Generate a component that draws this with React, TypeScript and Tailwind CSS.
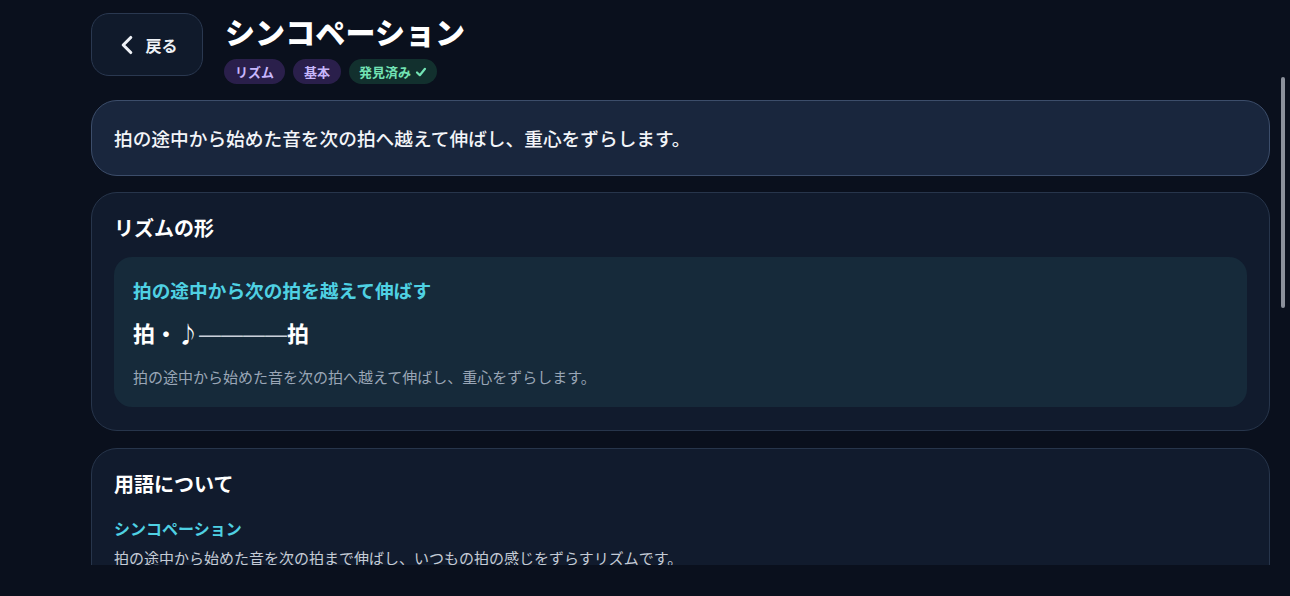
import { ChevronLeft } from 'lucide-react'

const font = { fontFamily: '"Noto Sans CJK JP", "Noto Sans", sans-serif' }

function Tag({ children, tone }: { children: React.ReactNode; tone: 'purple' | 'green' }) {
  return (
    <span
      className={
        tone === 'purple'
          ? 'h-[25px] px-[11px] rounded-full bg-[#2a1f4b] text-[#c7b6fb] text-[13px] font-bold flex items-center'
          : 'h-[25px] px-[10px] rounded-full bg-[#12302e] text-[#72e3b4] text-[13px] font-bold flex items-center gap-[4px]'
      }
    >
      {children}
    </span>
  )
}

export default function App() {
  return (
    <div className="relative h-[596px] w-full overflow-hidden bg-[#0a101d] text-[#f3f5f9]" style={font}>
      <div className="h-[565px] overflow-hidden pl-[91px] pr-[20px] pt-[13px]">
        {/* Header */}
        <div className="flex items-start gap-[22px]">
          <button className="w-[112px] h-[63px] rounded-[18px] border border-[#2a3850] bg-[#101a2b] flex items-center justify-center gap-[3px] text-[16px] font-bold text-[#eef1f6]">
            <ChevronLeft className="w-[30px] h-[30px] -ml-[4px]" strokeWidth={2.5} />
            <span>戻る</span>
          </button>
          <div className="flex flex-col">
            <h1 className="text-[30px] leading-[36px] font-black tracking-[0.1px] text-white">シンコペーション</h1>
            <div className="flex gap-[8px] mt-[10px] -ml-[1px]">
              <Tag tone="purple">リズム</Tag>
              <Tag tone="purple">基本</Tag>
              <Tag tone="green">
                発見済み
                <svg viewBox="0 0 12 12" className="w-[12px] h-[12px]" fill="none" stroke="currentColor" strokeWidth={2.2} strokeLinecap="round" strokeLinejoin="round">
                  <path d="M2 6.5 L4.8 9.2 L10 2.8" />
                </svg>
              </Tag>
            </div>
          </div>
        </div>

        {/* Summary */}
        <div className="mt-[16px] h-[76px] rounded-[26px] border border-[#3c4d6a] bg-[#19263d] px-[22px] flex items-center">
          <p className="text-[18.7px] font-medium text-[#f3f5f9]">拍の途中から始めた音を次の拍へ越えて伸ばし、重心をずらします。</p>
        </div>

        {/* Rhythm shape */}
        <section className="mt-[16px] rounded-[26px] border border-[#27354b] bg-[#111b2d] px-[22px] pt-[21px] pb-[23px]">
          <h2 className="text-[20px] leading-[28px] font-bold text-white">リズムの形</h2>
          <div className="mt-[15px] rounded-[18px] bg-[#162a3a] px-[19px] pt-[19px] pb-[18px]">
            <h3 className="text-[18.7px] leading-[28px] font-bold text-[#4fd1e3]">拍の途中から次の拍を越えて伸ばす</h3>
            <p className="mt-[11px] text-[22px] leading-[34px] font-bold text-white">
              拍・♪
              <span className="font-normal text-[#c9d0da]" style={{ fontFamily: '"Liberation Sans", sans-serif' }}>
                ————
              </span>
              拍
            </p>
            <p className="mt-[13px] text-[15px] leading-[24px] text-[#9aa6b6]">拍の途中から始めた音を次の拍へ越えて伸ばし、重心をずらします。</p>
          </div>
        </section>

        {/* Terms */}
        <section className="mt-[17px] rounded-[26px] border border-[#27354b] bg-[#111b2d] px-[22px] pt-[21px] pb-[22px]">
          <h2 className="text-[20px] leading-[28px] font-bold text-white">用語について</h2>
          <h3 className="mt-[18px] text-[16px] leading-[24px] font-bold text-[#4fd1e3]">シンコペーション</h3>
          <p className="mt-[6px] text-[15px] leading-[24px] text-[#c5ccd6]">拍の途中から始めた音を次の拍まで伸ばし、いつもの拍の感じをずらすリズムです。</p>
        </section>
      </div>

      {/* scrollbar thumb */}
      <div className="absolute left-[1281px] top-[77px] w-[4px] h-[231px] rounded-full bg-[#8b909b]" />
    </div>
  )
}
